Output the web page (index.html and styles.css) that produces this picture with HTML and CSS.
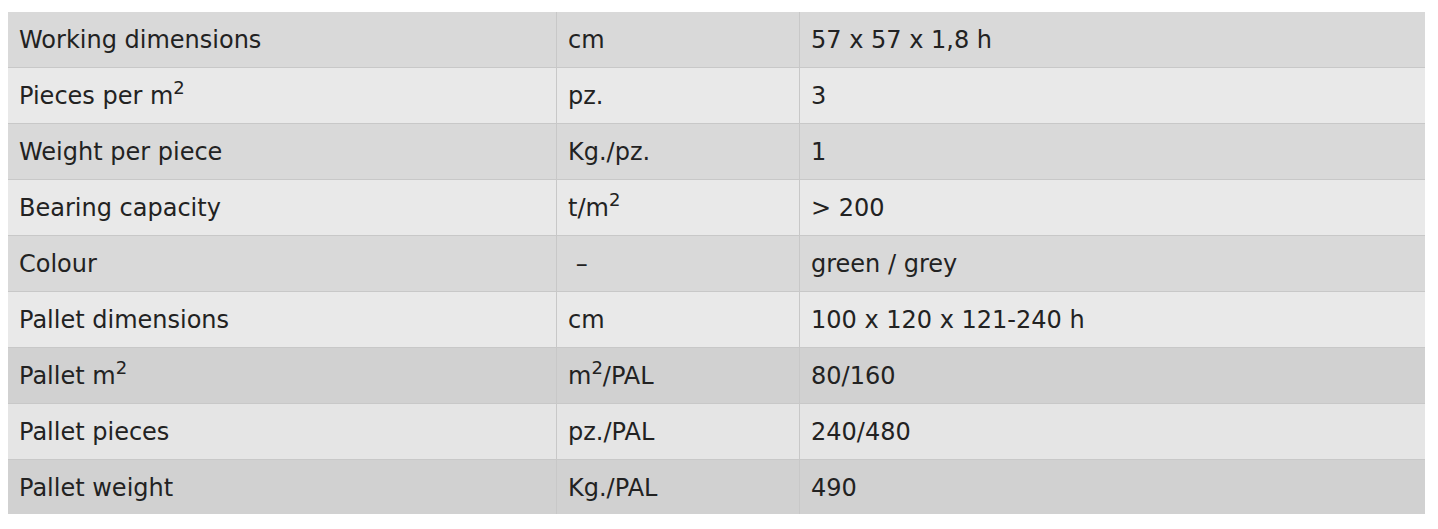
FILE: index.html
```html
<!DOCTYPE html>
<html>
<head>
<meta charset="utf-8">
<link rel="stylesheet" href="styles.css">
</head>
<body>
<table class="spec">
  <tbody>
    <tr class="odd"><td class="c1">Working dimensions</td><td class="c2">cm</td><td class="c3">57 x 57 x 1,8 h</td></tr>
    <tr class="even"><td class="c1">Pieces per m<sup>2</sup></td><td class="c2">pz.</td><td class="c3">3</td></tr>
    <tr class="odd"><td class="c1">Weight per piece</td><td class="c2">Kg./pz.</td><td class="c3">1</td></tr>
    <tr class="even"><td class="c1">Bearing capacity</td><td class="c2">t/m<sup>2</sup></td><td class="c3">&gt; 200</td></tr>
    <tr class="odd"><td class="c1">Colour</td><td class="c2">&nbsp;–</td><td class="c3">green / grey</td></tr>
    <tr class="even"><td class="c1">Pallet dimensions</td><td class="c2">cm</td><td class="c3">100 x 120 x 121-240 h</td></tr>
    <tr class="odd dark"><td class="c1">Pallet m<sup>2</sup></td><td class="c2">m<sup>2</sup>/PAL</td><td class="c3">80/160</td></tr>
    <tr class="even dark"><td class="c1">Pallet pieces</td><td class="c2">pz./PAL</td><td class="c3">240/480</td></tr>
    <tr class="odd dark last"><td class="c1">Pallet weight</td><td class="c2">Kg./PAL</td><td class="c3">490</td></tr>
  </tbody>
</table>
</body>
</html>
```
FILE: styles.css
```css
html, body {
  margin: 0;
  padding: 0;
  background: #ffffff;
}
body {
  padding: 12px 13px 0 8px;
  font-family: "DejaVu Sans", Verdana, sans-serif;
  color: #222222;
}
.spec {
  width: 1417px;
  border-collapse: collapse;
  table-layout: fixed;
  font-size: 24px;
}
.spec td {
  height: 54px;
  padding: 1px 11px 0;
  vertical-align: middle;
  border: 1px solid #c8c8c8;
  border-top: 0;
  line-height: 28px;
  white-space: nowrap;
}
.spec tr td:first-child { border-left: 0; }
.spec tr td:last-child { border-right: 0; }
.spec tr:last-child td { border-bottom: 0; }
.spec tr.last td { height: 53px; }
.c1 { width: 526px; }
.c2 { width: 220px; }
.odd { background: #d9d9d9; }
.even { background: #e9e9e9; }
.odd.dark { background: #d1d1d1; }
.even.dark { background: #e5e5e5; }
.spec sup {
  font-size: 0.75em;
  line-height: 0;
  vertical-align: 0.55em;
}
```
